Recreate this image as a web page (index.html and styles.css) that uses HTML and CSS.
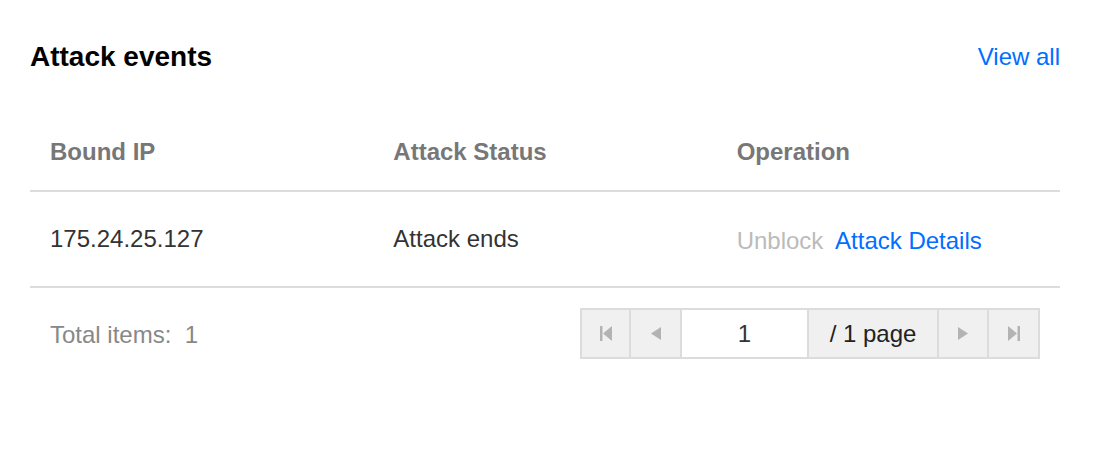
FILE: index.html
```html
<!DOCTYPE html>
<html>
<head>
<meta charset="utf-8">
<link rel="stylesheet" href="styles.css">
</head>
<body>
<div class="card">
  <div class="card-head">
    <h2 class="title">Attack events</h2>
    <a class="link view-all" href="#">View all</a>
  </div>
  <div class="table">
    <div class="row head-row">
      <div class="cell">Bound IP</div>
      <div class="cell">Attack Status</div>
      <div class="cell">Operation</div>
    </div>
    <div class="row body-row">
      <div class="cell">175.24.25.127</div>
      <div class="cell">Attack ends</div>
      <div class="cell ops"><span class="disabled">Unblock</span> <a class="link details" href="#">Attack Details</a></div>
    </div>
  </div>
  <div class="footer">
    <div class="total">Total items:&nbsp; 1</div>
    <div class="pager">
      <div class="pbtn w-first"><svg width="12" height="15" viewBox="0 0 12 15"><rect x="0" y="0" width="2.5" height="15" fill="#b3b3b3"/><polygon points="12,0 3,7.5 12,15" fill="#b3b3b3"/></svg></div>
      <div class="pbtn w-prev"><svg width="10" height="13" viewBox="0 0 10 13"><polygon points="10,0 0,6.5 10,13" fill="#b3b3b3"/></svg></div>
      <div class="pinput">1</div>
      <div class="ptext">/ 1 page</div>
      <div class="pbtn w-next"><svg width="10" height="13" viewBox="0 0 10 13"><polygon points="0,0 10,6.5 0,13" fill="#b3b3b3"/></svg></div>
      <div class="pbtn w-last"><svg width="12" height="15" viewBox="0 0 12 15"><polygon points="0,0 9,7.5 0,15" fill="#b3b3b3"/><rect x="9.5" y="0" width="2.5" height="15" fill="#b3b3b3"/></svg></div>
    </div>
  </div>
</div>
</body>
</html>
```
FILE: styles.css
```css
html, body {
  margin: 0;
  padding: 0;
  background: #fff;
}
body {
  font-family: "Liberation Sans", Arial, Helvetica, sans-serif;
  width: 1094px;
  height: 466px;
  overflow: hidden;
}
.card {
  padding: 37px 34px 0 30px;
}
.card-head {
  display: flex;
  justify-content: space-between;
  align-items: center;
  height: 40px;
}
.title {
  margin: 0;
  font-size: 28px;
  font-weight: bold;
  color: #000;
  line-height: 40px;
}
.link {
  color: #006eff;
  text-decoration: none;
}
.view-all {
  font-size: 24px;
  line-height: 40px;
}
.table {
  margin-top: 37px;
}
.row {
  display: grid;
  grid-template-columns: 1fr 1fr 1fr;
  border-bottom: 2px solid #dcdcdc;
  align-items: center;
}
.cell {
  padding: 0 20px;
  font-size: 24px;
}
.head-row {
  height: 76px;
}
.head-row .cell {
  font-weight: bold;
  color: #777;
}
.body-row {
  height: 94px;
}
.body-row .cell {
  color: #333;
}
.body-row .ops {
  padding-top: 3px;
}
.disabled {
  color: #bbb;
}
.details {
  margin-left: 5px;
}
.footer {
  display: flex;
  align-items: center;
  justify-content: space-between;
  padding: 20px 20px 0 20px;
}
.total {
  font-size: 24px;
  color: #888;
  padding-top: 2px;
}
.pager {
  display: flex;
  border: 2px solid #dcdcdc;
  height: 47px;
  background: #f0f0f0;
}
.pager > div {
  display: flex;
  align-items: center;
  justify-content: center;
  border-left: 2px solid #dcdcdc;
  font-size: 24px;
}
.pager > div:first-child {
  border-left: none;
}
.w-first { width: 47px; }
.w-prev { width: 49px; }
.pinput {
  width: 125px;
  background: #fff;
  color: #333;
}
.ptext {
  width: 128px;
  color: #222;
}
.w-next { width: 48px; }
.w-last { width: 49px; }
```
